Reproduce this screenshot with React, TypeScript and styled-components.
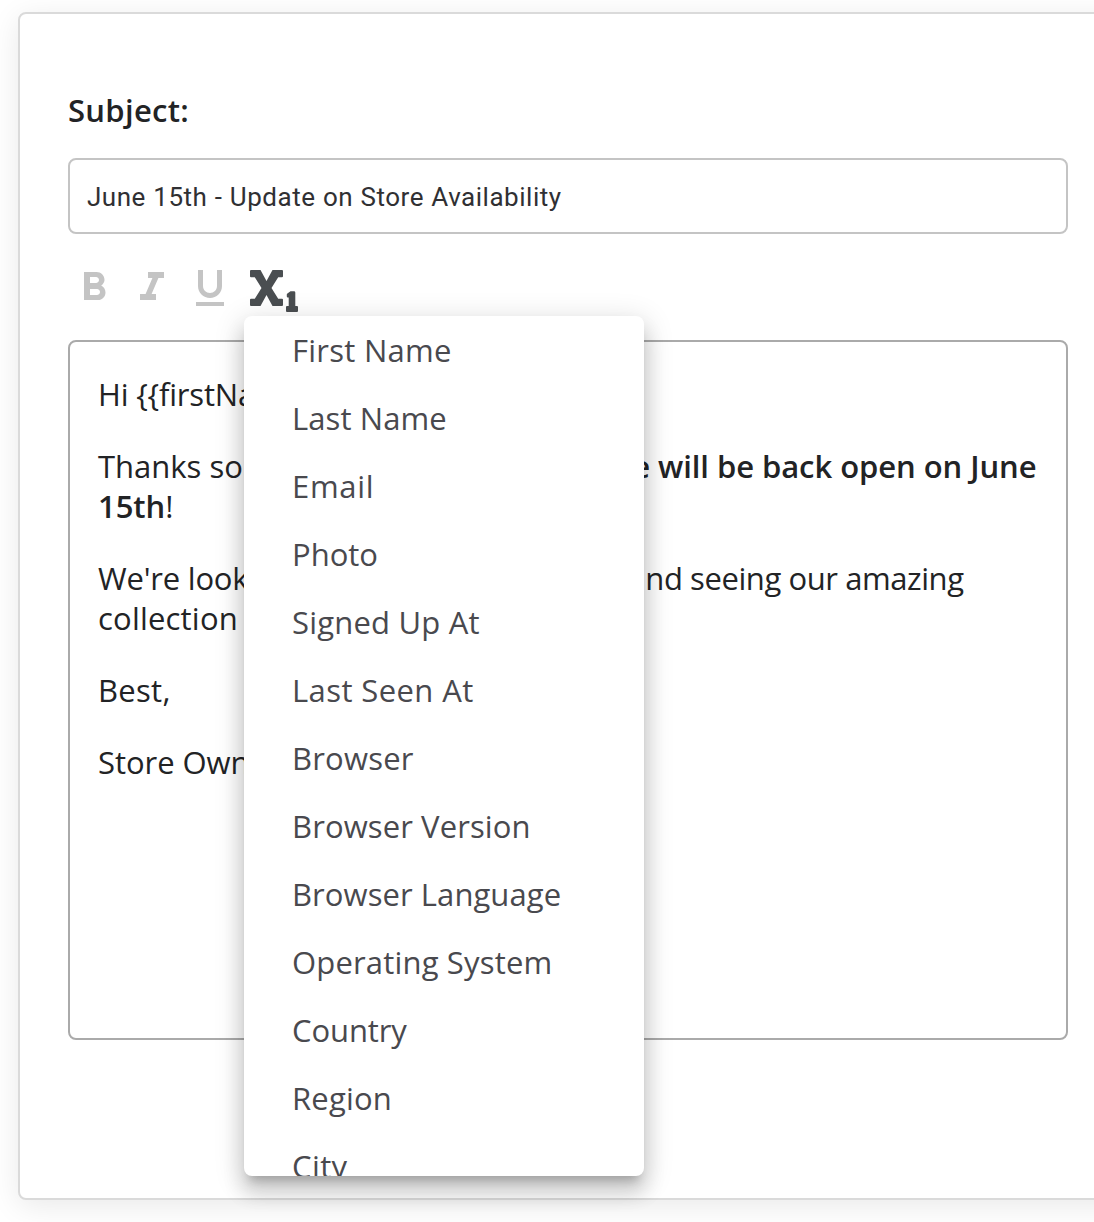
import React from "react";
import styled, { createGlobalStyle } from "styled-components";
import { MdFormatBold, MdFormatItalic, MdFormatUnderlined } from "react-icons/md";

const GlobalStyle = createGlobalStyle`
  *, *::before, *::after { box-sizing: border-box; }
  html, body { margin: 0; background: #ffffff; }
  body {
    height: 1222px;
    overflow: hidden;
    font-family: "Open Sans", "Noto Sans", sans-serif;
  }
`;

const Page = styled.main`
  height: 1222px;
  padding: 12px 0 22px 18px;
  overflow: hidden;
`;

const Card = styled.section`
  width: 1120px;
  height: 1188px;
  padding: 75px 48px 0;
  border: 2px solid #dadada;
  border-radius: 8px;
  background: #ffffff;
  box-shadow: 0 6px 30px rgba(0, 0, 0, 0.09);
`;

const Form = styled.div`
  display: flex;
  flex-direction: column;
  width: 1000px;
`;

const Label = styled.label`
  height: 42px;
  line-height: 42px;
  margin-bottom: 27px;
  font-size: 31px;
  font-weight: 600;
  letter-spacing: 0.3px;
  color: #222325;
`;

const SubjectField = styled.div`
  display: flex;
  align-items: center;
  height: 76px;
  padding: 2px 17px 0;
  border: 2px solid #c4c4c4;
  border-radius: 8px;
  font-family: Roboto, "Open Sans", sans-serif;
  font-size: 26px;
  letter-spacing: 0.52px;
  word-spacing: 0.4px;
  color: #303033;
`;

const Toolbar = styled.div`
  position: relative;
  display: flex;
  align-items: flex-start;
  gap: 10px;
  height: 106px;
  padding: 30px 0 0 2px;
`;

const ToolButton = styled.button<{ $active?: boolean }>`
  display: flex;
  width: 48px;
  height: 48px;
  padding: 0;
  border: 0;
  background: none;
  color: ${(p) => (p.$active ? "#4a4e51" : "#c4c4c4")};
`;

const VariableIcon = styled.svg`
  display: block;
  flex: none;
  width: 48px;
  height: 42px;
  margin: 6px 0 0 6px;
`;

const Menu = styled.ul`
  position: absolute;
  z-index: 2;
  top: 82px;
  left: 176px;
  width: 400px;
  height: 860px;
  margin: 0;
  padding: 0;
  overflow: hidden;
  list-style: none;
  border-radius: 8px;
  background: #ffffff;
  box-shadow:
    0 10px 10px -6px rgba(0, 0, 0, 0.2),
    0 16px 20px 2px rgba(0, 0, 0, 0.14),
    0 6px 28px 4px rgba(0, 0, 0, 0.12);
`;

const MenuItem = styled.li<{ $tracking: number }>`
  height: 68px;
  padding: 0 48px;
  line-height: 68px;
  font-size: 31px;
  letter-spacing: ${(p) => p.$tracking}px;
  white-space: nowrap;
  color: #49494e;
`;

const Editor = styled.div`
  display: flex;
  flex-direction: column;
  gap: 32px;
  height: 700px;
  padding: 32px 20px 0 28px;
  border: 2px solid #aaaaaa;
  border-radius: 8px;
  font-size: 31px;
  line-height: 40px;
  color: #222325;
`;

const Paragraph = styled.p`
  margin: 0;
`;

const Run = styled.span<{ $tracking: number }>`
  letter-spacing: ${(p) => p.$tracking}px;
`;

const Strong = styled.strong`
  font-weight: 600;
  letter-spacing: -0.06px;
`;

const variables = [
  { name: "First Name", tracking: 0.27 },
  { name: "Last Name", tracking: 0.1 },
  { name: "Email", tracking: 0.7 },
  { name: "Photo", tracking: 0 },
  { name: "Signed Up At", tracking: 0.2 },
  { name: "Last Seen At", tracking: 0.4 },
  { name: "Browser", tracking: 0.2 },
  { name: "Browser Version", tracking: 0.1 },
  { name: "Browser Language", tracking: 0.07 },
  { name: "Operating System", tracking: 0.17 },
  { name: "Country", tracking: -0.1 },
  { name: "Region", tracking: 0.2 },
  { name: "City", tracking: 0.4 },
];

export default function App() {
  return (
    <>
      <GlobalStyle />
      <Page>
        <Card>
          <Form>
            <Label>Subject:</Label>
            <SubjectField>June 15th - Update on Store Availability</SubjectField>
            <Toolbar>
              <ToolButton aria-label="Bold"><MdFormatBold size={48} /></ToolButton>
              <ToolButton aria-label="Italic"><MdFormatItalic size={48} /></ToolButton>
              <ToolButton aria-label="Underline"><MdFormatUnderlined size={48} /></ToolButton>
              <ToolButton aria-label="Insert variable" $active>
                <VariableIcon viewBox="0 0 48 42" fill="currentColor">
                  <path d="M1 0H10.5L16.5 11L22.5 0H32Q33 0 33 1V6.2Q33 7.2 32 7.2H28.2L21.5 18L28.2 28.8H32Q33 28.8 33 29.8V35Q33 36 32 36H22.5L16.5 25L10.5 36H1Q0 36 0 35V29.8Q0 28.8 1 28.8H4.8L11.5 18L4.8 7.2H1Q0 7.2 0 6.2V1Q0 0 1 0Z" />
                  <path d="M40.5 21.2H44Q45.3 21.2 45.3 22.5V36H47Q48 36 48 37V41Q48 42 47 42H37Q36 42 36 41V37Q36 36 37 36H38.7V27.5H37.8Q36.8 27.5 36.8 26.5V24.6Q36.8 24 37.4 23.6Z" />
                </VariableIcon>
              </ToolButton>
              <Menu>
                {variables.map((v) => (
                  <MenuItem key={v.name} $tracking={v.tracking}>{v.name}</MenuItem>
                ))}
              </Menu>
            </Toolbar>
            <Editor>
              <Paragraph><Run $tracking={-0.2}>Hi {"{{firstName}}"},</Run></Paragraph>
              <Paragraph>
                Thanks so <Run $tracking={-0.17}>much for waiting.</Run>{" "}
                <Strong>Our store will be back open on June 15th</Strong>!
              </Paragraph>
              <Paragraph>
                <Run $tracking={-0.2}>We're looking </Run>
                <Run $tracking={-0.42}>forward to you arriving and seeing our amazing</Run>{" "}
                <Run $tracking={0.2}>collection of items.</Run>
              </Paragraph>
              <Paragraph><Run $tracking={0.3}>Best,</Run></Paragraph>
              <Paragraph><Run $tracking={-0.05}>Store Owner</Run></Paragraph>
            </Editor>
          </Form>
        </Card>
      </Page>
    </>
  );
}
